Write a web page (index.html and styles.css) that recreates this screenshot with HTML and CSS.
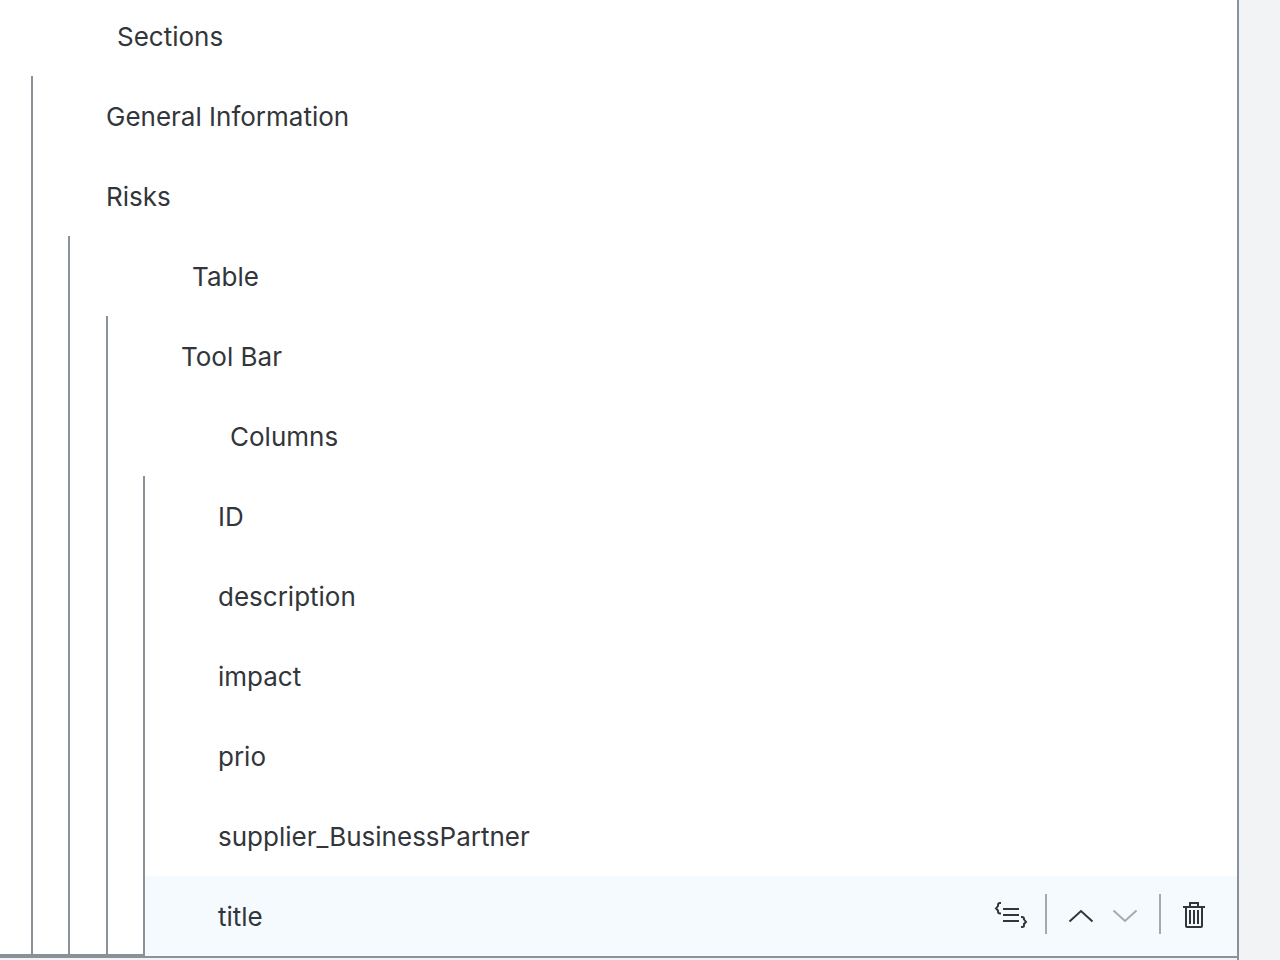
FILE: index.html
```html
<!DOCTYPE html>
<html lang="en">
<head>
<meta charset="utf-8">
<title>Page outline</title>
<meta name="viewport" content="width=device-width, initial-scale=1">
<link rel="stylesheet" href="styles.css">
</head>
<body>
<main class="panel">
  <ul class="tree">
    <li>
      <div class="row row-root">Sections</div>
      <ul class="group group-root">
        <li><div class="row">General Information</div></li>
        <li>
          <div class="row">Risks</div>
          <ul class="group">
            <li>
              <div class="row row-parent">Table</div>
              <ul class="group group-table">
                <li><div class="row">Tool Bar</div></li>
                <li>
                  <div class="row row-parent">Columns</div>
                  <ul class="group">
                    <li><div class="row">ID</div></li>
                    <li><div class="row">description</div></li>
                    <li><div class="row">impact</div></li>
                    <li><div class="row">prio</div></li>
                    <li><div class="row">supplier_BusinessPartner</div></li>
                    <li>
                      <div class="row row-active">
                        <span>title</span>
                        <div class="actions">
                          <button class="action" type="button" aria-label="Show in source code">
                            <svg class="icon" viewBox="0 0 36 40" aria-hidden="true">
                              <path d="M10 15H26M10 21H26M10 27H26"/>
                              <path d="M8 9H7Q5 9 5 11V12L3 14.500L5 16.500V17.500Q5 19.500 7 19.500H8"/>
                              <path d="M28 23H29Q31 23 31 25V25.500L33 28L31 30V31.500Q31 33 29 33H28"/>
                            </svg>
                          </button>
                          <span class="divider"></span>
                          <button class="action" type="button" aria-label="Move up">
                            <svg class="icon" viewBox="0 0 36 40" aria-hidden="true"><path d="M6.500 27.500L18 17L29.500 27.500"/></svg>
                          </button>
                          <button class="action action-next" type="button" aria-label="Move down" disabled>
                            <svg class="icon" viewBox="0 0 36 40" aria-hidden="true"><path d="M6.500 16.500L18 27L29.500 16.500"/></svg>
                          </button>
                          <span class="divider"></span>
                          <button class="action" type="button" aria-label="Delete">
                            <svg class="icon" viewBox="0 0 36 40" aria-hidden="true">
                              <path d="M6 13H28M9 13V32Q9 33 10 33H24Q25 33 25 32V13M13 13V9H21V13M13 16V30M17 16V30M21 16V30"/>
                            </svg>
                          </button>
                        </div>
                      </div>
                    </li>
                  </ul>
                </li>
              </ul>
            </li>
          </ul>
        </li>
      </ul>
    </li>
  </ul>
</main>
</body>
</html>
```

FILE: styles.css
```css
* {
  box-sizing: border-box;
}

body {
  margin: 0;
  background: #f2f3f4;
  color: #32363a;
  font-family: Inter, "Liberation Sans", sans-serif;
  font-size: 26px;
  line-height: 32px;
}

.panel {
  min-height: 100vh;
  margin-right: 41px;
  border-right: 2px solid #89919a;
  overflow: hidden;
}

ul {
  margin: 0;
  padding: 0;
  list-style: none;
}

/* The bottom stripe shows only in the indent gutters, where no row covers it. */
.tree {
  margin-top: -4px;
  border-bottom: 2px solid #89919a;
  background: linear-gradient(#89919a, #89919a) bottom / 100% 2px no-repeat padding-box, #fff;
}

.group {
  margin-left: 35px;
  border-left: 2px solid #89919a;
}

.group-root {
  margin-left: 31px;
}

.group-table {
  margin-left: 36px;
}

.row {
  display: flex;
  align-items: center;
  justify-content: space-between;
  min-height: 80px;
  padding: 2px 24px 0 73px;
  background: #fff;
}

.row-root {
  padding-left: 117px;
}

.row-parent {
  padding-left: 122px;
}

.row-active {
  background: #f5faff;
}

.actions {
  display: flex;
  align-items: center;
  padding-bottom: 6px;
}

.action {
  width: 36px;
  height: 40px;
  padding: 0;
  border: 0;
  background: none;
  color: inherit;
  cursor: pointer;
}

.action:disabled {
  opacity: 0.4;
  cursor: default;
}

.action-next {
  margin-left: 8px;
}

.divider {
  width: 2px;
  height: 40px;
  margin: 0 16px;
  background: #a6a9ac;
}

.icon {
  display: block;
  width: 36px;
  height: 40px;
  fill: none;
  stroke: currentColor;
  stroke-width: 2;
}
```
